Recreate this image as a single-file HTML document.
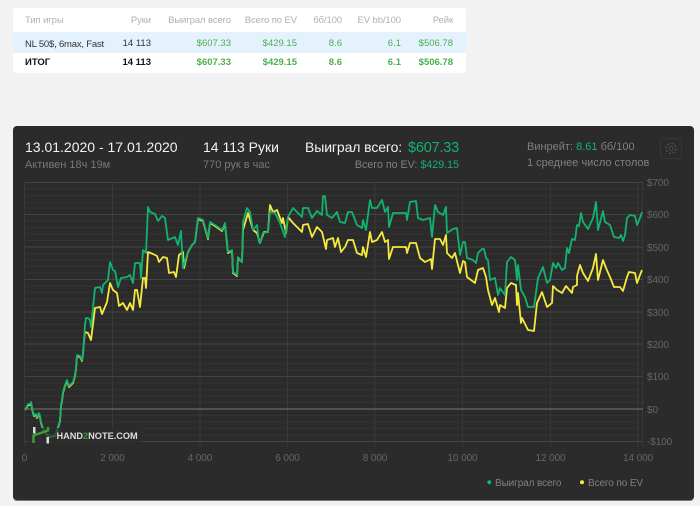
<!DOCTYPE html>
<html lang="ru"><head><meta charset="utf-8"><title>Chart</title>
<style>
html,body{margin:0;padding:0;background:#f2f2f2;}
body{width:700px;height:506px;position:relative;overflow:hidden;font-family:"Liberation Sans",sans-serif;}
#w{position:absolute;left:0;top:0;width:700px;height:506px;filter:blur(.35px);}
.t{position:absolute;white-space:nowrap;line-height:12px;}
.r{text-align:right;}
#tb{position:absolute;left:13px;top:8px;width:453px;height:65px;background:#fff;border-radius:3px;}
#rw{position:absolute;left:13px;top:32px;width:453px;height:21px;background:#e3f2fd;}
#card{position:absolute;left:12.5px;top:126px;width:681.5px;height:374px;background:#2b2b2b;border-radius:4px;box-shadow:0 1px 0 #777;}
.h{font-size:9.5px;color:#b0b0b0;letter-spacing:-.1px;}
.c{font-size:9.5px;color:#333;}
.g{color:#4caf50;}
.b{font-weight:bold;color:#111;}
</style></head><body><div id="w">
<div id="tb"></div><div id="rw"></div>

<div class="t h" style="left:25px;top:15px;">Тип игры</div>
<div class="t h r" style="right:549px;top:15px;">Руки</div>
<div class="t h r" style="right:469px;top:15px;">Выиграл всего</div>
<div class="t h r" style="right:403px;top:15px;">Всего по EV</div>
<div class="t h r" style="right:358px;top:15px;">бб/100</div>
<div class="t h r" style="right:299px;top:15px;">EV bb/100</div>
<div class="t h r" style="right:247px;top:15px;">Рейк</div>

<div class="t c" style="left:25px;top:39px;letter-spacing:-.2px;">NL 50$, 6max, Fast</div>
<div class="t c r" style="right:549px;top:38px;">14 113</div>
<div class="t c g r" style="right:469px;top:38px;">$607.33</div>
<div class="t c g r" style="right:403px;top:38px;">$429.15</div>
<div class="t c g r" style="right:358px;top:38px;">8.6</div>
<div class="t c g r" style="right:299px;top:38px;">6.1</div>
<div class="t c g r" style="right:247px;top:38px;">$506.78</div>

<div class="t c b" style="left:25px;top:57px;">ИТОГ</div>
<div class="t c b r" style="right:549px;top:57px;">14 113</div>
<div class="t c b g r" style="right:469px;top:57px;color:#4caf50;">$607.33</div>
<div class="t c b g r" style="right:403px;top:57px;color:#4caf50;">$429.15</div>
<div class="t c b g r" style="right:358px;top:57px;color:#4caf50;">8.6</div>
<div class="t c b g r" style="right:299px;top:57px;color:#4caf50;">6.1</div>
<div class="t c b g r" style="right:247px;top:57px;color:#4caf50;">$506.78</div>

<div id="card"></div>

<div class="t" style="left:25px;top:141px;font-size:14px;color:#f2f2f2;">13.01.2020 - 17.01.2020</div>
<div class="t" style="left:203px;top:141px;font-size:14px;color:#f2f2f2;">14 113 Руки</div>
<div class="t" style="left:305px;top:141px;font-size:14px;color:#f2f2f2;letter-spacing:-.1px;">Выиграл всего:</div>
<div class="t r" style="right:241px;top:142px;font-size:14.500px;color:#12b26f;letter-spacing:-.2px;">$607.33</div>
<div class="t" style="left:25px;top:159px;font-size:11px;color:#777;">Активен 18ч 19м</div>
<div class="t" style="left:203px;top:159px;font-size:11px;color:#777;">770 рук в час</div>
<div class="t r" style="right:241px;top:159px;font-size:10.700px;color:#808080;">Всего по EV: <span style="color:#12b26f;">$429.15</span></div>
<div class="t" style="left:527px;top:141px;font-size:11px;color:#808080;">Винрейт: <span style="color:#12b26f;">8.61</span> бб/100</div>
<div class="t" style="left:527px;top:157px;font-size:11px;color:#808080;">1 среднее число столов</div>

<svg width="700" height="506" viewBox="0 0 700 506" style="position:absolute;left:0;top:0;">
<rect x="660.5" y="138.5" width="21" height="20" rx="2" fill="none" stroke="#363636"/>
<circle cx="671" cy="148.5" r="2" fill="none" stroke="#4c4c4c"/>
<circle cx="671" cy="148.5" r="5" fill="none" stroke="#4c4c4c" stroke-width="1.5" stroke-dasharray="2.2 1.7"/>

<g stroke="#333" stroke-width="1">
<path d="M25 189H643M25 195.500H643M25 202H643M25 208H643M25 221H643M25 227.500H643M25 234H643M25 240.500H643M25 253.500H643M25 260H643M25 266.500H643M25 273H643M25 286H643M25 292.500H643M25 299H643M25 305.500H643M25 318H643M25 324.500H643M25 331H643M25 337.500H643M25 350.500H643M25 357H643M25 363.500H643M25 370H643M25 383H643M25 389.500H643M25 396H643M25 402.500H643M25 415.500H643M25 422H643M25 428.500H643M25 435H643"/>
<path d="M24.500 182V447M112.500 182V447M200 182V447M287.500 182V447M375 182V447M462.500 182V447M550.500 182V447M638 182V447M642.500 182V447" stroke="#383838"/>
</g>
<g stroke="#444" stroke-width="1">
<path d="M25 182.500H643M25 214.500H643M25 247H643M25 279.500H643M25 312H643M25 344H643M25 376.500H643M25 441.500H643"/>
</g>
<path d="M25 409H643" stroke="#777" stroke-width="1"/>

<polyline fill="none" stroke="#f5ea3c" stroke-width="1.800" stroke-linejoin="round" points="25,410 27,407 28,405 30,405 31,403 32,408 33,413 34,416 36,415 37,418 39,414 40,417 41,423 43,429 45,432 47,435 50,437 55,436 58,428 60,421 61,406 62,401 63,393 65,386 67,381 69,387 71,385 73,383 75,376 76,369 77,356 80,357 82,361 83,354 84,341 85,332 88,333 91,340 95,308 100,307 102,314 107,302 110,283 113,290 117,293 119,306 123,303 127,310 130,303 133,310 135,290 137,290 140,307 143,278 145,278 146,288 148,252 153,254 157,256 159,262 163,257 167,258 169,273 174,272 176,277 179,255 183,252 184,268 188,252 192,245 195,242 198,219 203,221 208,239 210,223 215,226 222,231 225,224 228,253 232,251 233,273 237,276 238,258 242,262 243,230 248,213 253,230 257,233 260,243 264,232 268,232 270,205 273,212 277,210 282,223 283,218 286,233 288,217 293,223 302,232 303,225 308,224 312,237 317,227 322,232 326,249 327,240 333,238 335,247 338,238 341,252 345,247 348,240 353,240 357,253 362,255 363,247 366,257 370,232 372,242 377,240 382,232 385,242 388,240 389,259 393,247 398,247 406,247 407,253 410,243 416,243 420,258 425,262 431,259 432,269 435,239 440,239 443,245 446,235 447,253 452,258 455,253 460,273 463,261 465,262 467,277 475,283 478,270 483,268 486,277 488,290 492,305 495,298 499,312 500,305 505,308 507,288 511,283 516,285 517,305 518,293 521,323 522,318 528,330 534,331 537,303 542,292 547,307 552,303 553,286 557,290 562,293 566,286 572,293 573,287 577,285 577,276 580,265 583,273 588,281 593,268 596,254 598,280 603,260 606,268 610,277 614,287 620,287 623,291 627,277 629,272 635,273 637,283 640,275 642,270"/>

<polyline fill="none" stroke="#12b26f" stroke-width="1.800" stroke-linejoin="round" points="25,410 27,406 28,404 30,404 31,402 32,407 33,412 34,415 36,414 37,417 39,413 40,416 41,422 43,428 45,431 47,434 50,436 55,435 58,427 60,420 61,405 62,400 63,392 65,385 67,380 69,386 71,384 73,382 75,375 76,368 77,355 80,356 82,360 83,353 84,340 85,325 86,318 88,318 90,320 91,327 95,288 100,287 102,293 103,285 108,280 110,262 113,270 115,271 118,287 121,278 127,277 130,275 133,283 135,263 140,263 141,278 143,250 146,253 148,207 150,212 155,214 158,221 162,216 165,218 168,240 175,237 178,245 181,231 183,268 188,252 192,245 195,242 198,218 203,220 208,238 210,222 215,225 222,230 225,223 228,252 232,250 233,272 237,275 238,257 242,262 243,222 247,208 250,212 253,230 257,225 259,242 260,243 263,233 268,232 270,212 275,213 280,223 285,237 288,217 293,208 297,212 302,217 303,208 308,208 312,218 317,211 322,215 323,196 325,196 327,215 332,218 337,212 340,222 345,223 348,212 352,212 357,225 362,228 363,220 366,230 370,200 372,208 377,208 382,200 385,212 388,207 389,227 393,213 398,213 406,213 407,220 410,202 416,201 418,218 423,220 430,218 432,237 435,205 438,212 443,215 446,207 447,233 453,229 457,228 460,255 463,242 465,242 467,258 473,260 476,263 478,253 482,249 484,249 486,258 488,260 490,280 495,278 498,295 500,288 505,295 507,262 511,257 515,260 517,280 518,265 521,290 525,297 528,307 534,307 538,278 543,267 547,283 550,280 553,263 556,268 558,263 562,270 565,268 567,248 569,253 572,239 575,240 577,225 579,226 581,213 583,222 588,229 593,218 596,202 598,230 603,211 605,222 610,225 614,237 619,238 621,235 623,241 625,235 627,218 630,215 635,216 637,225 640,218 642,212"/>

<rect x="28" y="428" width="114" height="19" fill="#2b2b2b" opacity=".72"/>
<path d="M33.500 443V435.500L48 430.500V427" fill="none" stroke="#3f9a3c" stroke-width="2.500"/>
<rect x="33" y="427" width="2.500" height="6.500" fill="#ddd"/>
<rect x="46.500" y="437" width="2.500" height="6.500" fill="#ddd"/>
<text x="56.500" y="439" font-family="Liberation Sans" font-size="9.200" font-weight="bold" fill="#ddd">HAND<tspan fill="#3f9a3c">2</tspan>NOTE.COM</text>

<g font-family="Liberation Sans" font-size="10" fill="#666" letter-spacing="-.1">
<text x="647" y="186">$700</text><text x="647" y="218">$600</text><text x="647" y="251">$500</text><text x="647" y="283">$400</text><text x="647" y="316">$300</text><text x="647" y="348">$200</text><text x="647" y="380">$100</text><text x="647" y="413">$0</text><text x="647" y="445">-$100</text>
<g text-anchor="middle"><text x="24.500" y="461">0</text><text x="112.500" y="461">2 000</text><text x="200" y="461">4 000</text><text x="287.500" y="461">6 000</text><text x="375" y="461">8 000</text><text x="462.500" y="461">10 000</text><text x="550.500" y="461">12 000</text><text x="638" y="461">14 000</text></g>
<g fill="#808080"><text x="495" y="486">Выиграл всего</text><text x="588" y="486">Всего по EV</text></g>
</g>
<circle cx="489.300" cy="482.300" r="2" fill="#12b26f"/>
<circle cx="582" cy="482.300" r="2" fill="#f5ea3c"/>
</svg>
</div></body></html>
